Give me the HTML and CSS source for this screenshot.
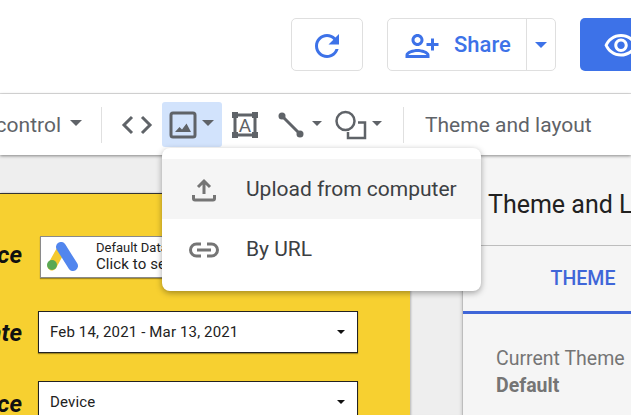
FILE: index.html
```html
<!DOCTYPE html>
<html>
    <head>
        <link rel="stylesheet" href="styles.css">
    </head>
    <body>
        <div id="app">
            <div class="header">
                <div class="btn refresh">
                    <svg width="36" height="36" viewBox="0 0 24 24"><path d="M17.65 6.35C16.2 4.9 14.21 4 12 4c-4.42 0-7.99 3.58-7.99 8s3.57 8 7.99 8c3.73 0 6.84-2.55 7.73-6h-2.08c-.82 2.33-3.04 4-5.65 4-3.31 0-6-2.69-6-6s2.69-6 6-6c1.66 0 3.14.69 4.22 1.78L13 11h7V4l-2.35 2.35z"/></svg>
                </div>
                <div class="btn share">
                    <div class="share-main">
                        <svg class="flip" width="36" height="36" viewBox="0 0 24 24"><path d="M15 12c2.21 0 4-1.79 4-4s-1.79-4-4-4-4 1.79-4 4 1.79 4 4 4zm0-6c1.1 0 2 .9 2 2s-.9 2-2 2-2-.9-2-2 .9-2 2-2zm0 8c-2.67 0-8 1.34-8 4v2h16v-2c0-2.66-5.33-4-8-4zm-6 4c.22-.72 3.31-2 6-2 2.7 0 5.8 1.29 6 2H9zm-3-3v-3h3v-2H6V7H4v3H1v2h3v3h2z"/></svg>
                        <span>Share</span>
                    </div>
                    <div class="share-more"><i class="caret blue"></i></div>
                </div>
                <div class="view">
                    <svg width="36" height="36" viewBox="0 0 24 24"><path d="M12 6c3.79 0 7.17 2.13 8.82 5.5C19.17 14.87 15.79 17 12 17s-7.17-2.13-8.82-5.5C4.83 8.13 8.21 6 12 6m0-2C7 4 2.73 7.11 1 11.5 2.73 15.89 7 19 12 19s9.27-3.11 11-7.5C21.27 7.11 17 4 12 4zm0 5c1.38 0 2.5 1.12 2.5 2.5S13.38 14 12 14s-2.5-1.12-2.5-2.5S10.62 9 12 9m0-2c-2.48 0-4.5 2.02-4.5 4.5S9.52 16 12 16s4.5-2.02 4.5-4.5S14.48 7 12 7z"/></svg>
                </div>
            </div>
            <div class="toolbar">
                <span class="tool-text control">control</span>
                <i class="caret"></i>
                <div class="sep first"></div>
                <svg class="code" width="32" height="20" viewBox="0 0 32 20"><path d="M11 2 3 10l8 8M21 2l8 8-8 8"/></svg>
                <div class="image-btn">
                    <svg width="28" height="28" viewBox="0 0 28 28"><rect x="2" y="2" width="24" height="24" rx="2" class="line thick"/><path class="solid" d="M6 21l4.500-5 2.500 2.500 4.500-6L22 21z"/></svg>
                    <i class="caret"></i>
                </div>
                <svg class="textbox" width="26" height="26" viewBox="0 0 26 26"><path class="line thick" d="M3 3h20v20H3z"/><path class="solid" d="M0 0h6v6H0zM20 0h6v6h-6zM0 20h6v6H0zM20 20h6v6h-6z"/><text x="13" y="19.500" text-anchor="middle" class="textbox-a">A</text></svg>
                <svg class="connector" width="26" height="26" viewBox="0 0 26 26"><path class="line thick" d="M4 4l18 18"/><circle class="solid" cx="4" cy="4" r="3.500"/><circle class="solid" cx="22" cy="22" r="3.500"/></svg>
                <i class="caret narrow"></i>
                <svg class="shape" width="32" height="30" viewBox="0 0 32 30"><circle class="line" cx="10.500" cy="11" r="9"/><path class="line" d="M23 12.500h7v15.500H13v-6"/></svg>
                <i class="caret narrow"></i>
                <div class="sep last"></div>
                <span class="tool-text">Theme and layout</span>
            </div>
            <div class="main">
                <div class="canvas">
                    <div class="report">
                        <div class="row source-row">
                            <div class="row-label">Data Source</div>
                            <div class="source-box">
                                <svg width="34" height="30" viewBox="0 0 34 30"><path d="M16 6 6 24" stroke="#f4c92f" stroke-width="9" stroke-linecap="round"/><path d="M15 5l12 19" stroke="#5286ee" stroke-width="10" stroke-linecap="round"/><circle cx="6" cy="23" r="5" fill="#5aa854"/></svg>
                                <div class="source-text">
                                    <div class="source-name">Default Data</div>
                                    <div class="source-hint">Click to select</div>
                                </div>
                            </div>
                        </div>
                        <div class="row date-row">
                            <div class="row-label">Select Date</div>
                            <div class="select-box"><span>Feb 14, 2021 - Mar 13, 2021</span><i class="caret small"></i></div>
                        </div>
                        <div class="row device-row">
                            <div class="row-label">Device</div>
                            <div class="select-box"><span>Device</span><i class="caret small"></i></div>
                        </div>
                    </div>
                </div>
                <div class="panel">
                    <div class="panel-title">Theme and Layout</div>
                    <div class="tabs"><div class="tab active">THEME</div></div>
                    <div class="panel-body">
                        <div class="theme-label">Current Theme</div>
                        <div class="theme-name">Default</div>
                    </div>
                </div>
            </div>
            <div class="menu">
                <div class="menu-item hover">
                    <div class="menu-icon"><svg width="26" height="26" viewBox="0 0 26 26"><path d="M13 18V5M7 11l6-6 6 6M2.500 19v3.500c0 1 .5 1.500 1.500 1.500h18c1 0 1.500-.5 1.500-1.500V19"/></svg></div>
                    <span>Upload from computer</span>
                </div>
                <div class="menu-item">
                    <div class="menu-icon link"><svg width="32" height="18" viewBox="0 0 32 18"><path d="M13 3H8.500a6 6 0 0 0 0 12H13M19 3h4.500a6 6 0 0 1 0 12H19M9 9h14"/></svg></div>
                    <span>By URL</span>
                </div>
            </div>
        </div>
    </body>
</html>
```

FILE: styles.css
```css
body{
    margin:0;
    font-family: Roboto, sans-serif;
    background-color: #fff;
}

#app{
    width:631px;
    height:415px;
    position: relative;
    overflow: hidden;
}

.header{
    height:75px;
    border-bottom:1px solid #e0e0e0;
    display: flex;
    align-items: flex-start;
    padding:18px 0 0 291px;
}

.btn{
    height:53px;
    box-sizing: border-box;
    border:1px solid #dfdfdf;
    border-radius: 5px;
    background-color: #fff;
    display: flex;
    align-items: center;
    flex-shrink: 0;
}

.btn svg{
    fill:#3d72e8;
    margin-top:2px;
}

.refresh{
    width:72px;
    justify-content: center;
    margin-right:24px;
}

.share{
    width:169px;
    margin-right:24px;
}

.share-main{
    width:139px;
    height:100%;
    display: flex;
    align-items: center;
    padding-left:16px;
    box-sizing: border-box;
    border-right:1px solid #dfdfdf;
    color:#3d72e8;
    font-size:22px;
    font-weight:500;
}

.share-main span{
    margin-left:14px;
}

.flip{
    transform: scaleX(-1);
}

.share-more{
    flex:1;
    display: flex;
    justify-content: center;
}

.view{
    width:100px;
    height:53px;
    flex-shrink: 0;
    background-color: #3d72e8;
    border-radius: 5px;
    display: flex;
    align-items: center;
    padding-left:23px;
    box-sizing: border-box;
}

.view svg{
    fill:#fff;
    margin-top:3px;
}

.caret{
    display: inline-block;
    width:0;
    height:0;
    flex-shrink: 0;
    border-left:6px solid transparent;
    border-right:6px solid transparent;
    border-top:6px solid #5f6368;
}

.toolbar .caret{
    margin-bottom:3px;
}

.caret.narrow{
    border-left-width:5px;
    border-right-width:5px;
    border-top-width:5px;
}

.caret.blue{
    border-top-color:#3d72e8;
}

.caret.small{
    border-left-width:4px;
    border-right-width:4px;
    border-top:4px solid #111;
}

.toolbar{
    height:61px;
    display: flex;
    align-items: center;
    position: relative;
    z-index: 2;
    background-color: #fff;
    box-shadow: 0 1px 3px rgba(0,0,0,.45);
    color:#5f6368;
}

.tool-text{
    font-size:21px;
    white-space: nowrap;
    color:#5f6368;
}

.control{
    width:61px;
    display: flex;
    justify-content: flex-end;
    flex-shrink: 0;
    margin-right:9px;
}

.sep{
    width:1px;
    height:36px;
    background-color: #e0e0e0;
    flex-shrink: 0;
}

.sep.first{
    margin:0 19px;
}

.sep.last{
    margin:0 21px;
}

.toolbar svg{
    flex-shrink: 0;
    fill:none;
}

.toolbar svg path, .line{
    stroke:#5f6368;
    stroke-width:2.500;
    fill:none;
}

.toolbar svg .thick{
    stroke-width:3;
}

.toolbar svg .solid{
    fill:#5f6368;
    stroke:none;
}

.code path{
    stroke-width:3 !important;
}

.code{
    margin-right:9px;
}

.image-btn{
    width:60px;
    height:45px;
    background-color: #d2e3fc;
    border-radius: 3px;
    display: flex;
    align-items: center;
    padding-left:7px;
    box-sizing: border-box;
    margin-right:10px;
}

.image-btn .caret{
    margin-left:5px;
}

.textbox{
    margin-right:20px;
}

.textbox-a{
    font-size:19px;
    fill:#5f6368;
    font-family: Roboto, sans-serif;
}

.connector{
    margin-right:8px;
}

.shape{
    margin:0 5px 0 13px;
}

.main{
    height:260px;
    display: flex;
}

.canvas{
    width:463px;
    flex-shrink: 0;
    background-color: #eee;
    padding-top:38px;
    box-sizing: border-box;
    border-right:1px solid #bdbdbd;
    box-shadow: inset -3px 0 3px -2px rgba(0,0,0,.12);
}

.report{
    width:410px;
    height:300px;
    background-color: #f7d030;
    border-top:1px solid #333;
    box-shadow: 1px 0 2px rgba(0,0,0,.25);
    box-sizing: border-box;
    padding-top:42px;
}

.row{
    display: flex;
    align-items: center;
}

.row-label{
    width:22px;
    margin-right:16px;
    display: flex;
    justify-content: flex-end;
    overflow: hidden;
    white-space: nowrap;
    font-size:24px;
    line-height:28px;
    font-weight:700;
    font-style: italic;
    color:#111;
}

.source-row .row-label{
    margin-right:18px;
    margin-bottom:4px;
}

.date-row .row-label{
    margin-top:2px;
}

.device-row .row-label{
    margin-top:4px;
}

.source-box{
    width:318px;
    height:42px;
    box-sizing: border-box;
    background-color: #fff;
    border:1px solid #8a8a8a;
    box-shadow: 0 1px 1px rgba(0,0,0,.35);
    display: flex;
    align-items: center;
    padding-left:5px;
}

.source-text{
    margin-left:16px;
    margin-top:1px;
    color:#222;
}

.source-name{
    font-size:13px;
    line-height:14px;
}

.source-hint{
    font-size:15px;
    line-height:19px;
    letter-spacing:.1px;
}

.select-box{
    width:320px;
    height:42px;
    box-sizing: border-box;
    background-color: #fff;
    border:1px solid #222;
    box-shadow: 0 1px 1px rgba(0,0,0,.35);
    display: flex;
    align-items: center;
    justify-content: space-between;
    padding:0 12px 0 11px;
    font-size:15px;
    letter-spacing:.15px;
    color:#222;
}

.date-row{
    margin-top:33px;
}

.device-row{
    margin-top:28px;
}

.panel{
    flex:1;
    min-width:0;
    background-color: #f5f5f5;
    overflow: hidden;
}

.panel-title{
    height:91px;
    box-sizing: border-box;
    border-bottom:1px solid #bdbdbd;
    padding:32px 0 0 25px;
    font-size:25px;
    line-height:36px;
    white-space: nowrap;
    color:#212121;
}

.tabs{
    width:240px;
    display: flex;
}

.tab{
    width:240px;
    flex-shrink: 0;
    height:68px;
    box-sizing: border-box;
    border-bottom:3px solid #3f66d8;
    padding-top:21px;
    text-align: center;
    font-size:19.500px;
    line-height:24px;
    font-weight:500;
    color:#3f66d8;
}

.panel-body{
    padding:31px 0 0 33px;
    font-size:19.500px;
    line-height:27px;
    color:#757575;
    white-space: nowrap;
}

.theme-name{
    font-weight:700;
}

.menu{
    position: absolute;
    left:162px;
    top:148px;
    width:319px;
    height:143px;
    box-sizing: border-box;
    padding:11px 0 12px;
    background-color: #fff;
    border-radius: 8px;
    box-shadow: 0 2px 6px rgba(0,0,0,.35);
    z-index: 5;
}

.menu-item{
    height:60px;
    display: flex;
    align-items: center;
    font-size:21px;
    color:#3c4043;
}

.menu-item.hover{
    background-color: #f5f5f5;
}

.menu-icon{
    width:84px;
    display: flex;
    justify-content: center;
}

.menu-icon.link{
    margin-top:2px;
}

.menu-icon svg{
    fill:none;
    stroke:#757575;
    stroke-width:3;
}
```
